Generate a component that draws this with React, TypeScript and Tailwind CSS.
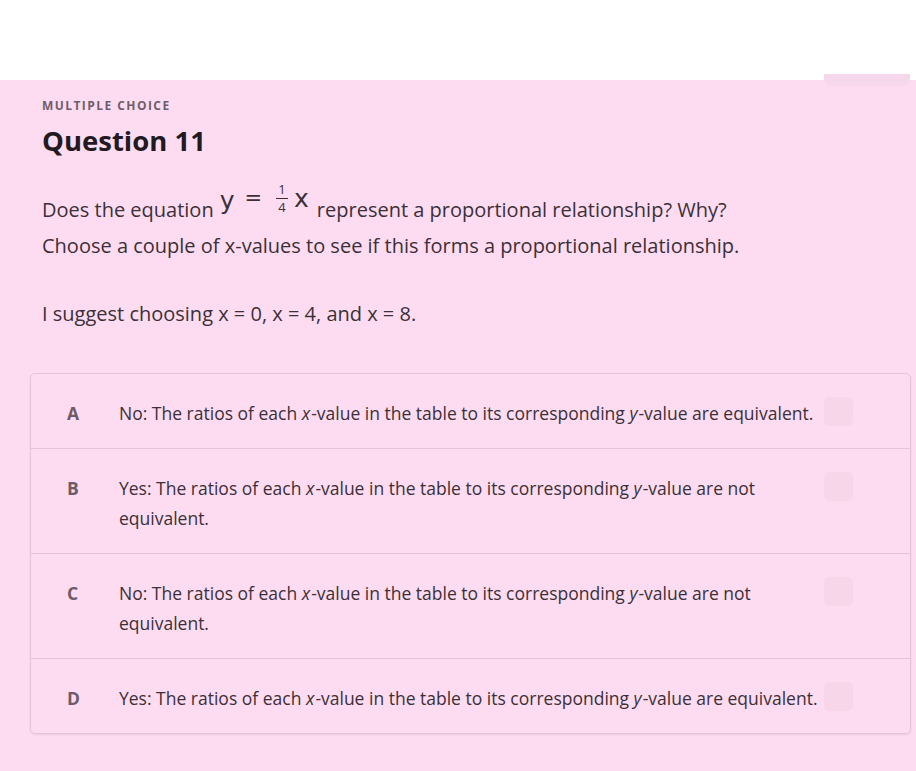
import React from 'react';

const options = [
  { letter: 'A', pre: 'No', rest: 'equivalent.' },
  { letter: 'B', pre: 'Yes', rest: 'not equivalent.' },
  { letter: 'C', pre: 'No', rest: 'not equivalent.' },
  { letter: 'D', pre: 'Yes', rest: 'equivalent.' },
];

const Fraction: React.FC = () => (
  <span className="inline-flex flex-col items-center mx-[4px] text-[13px] leading-[17px]">
    <span>1</span>
    <span className="border-t border-[#3a2f36] w-[12px] text-center">4</span>
  </span>
);

export default function App() {
  return (
    <div className="w-[916px] h-[771px] overflow-hidden bg-[#fddcf2] font-['Open_Sans',sans-serif] text-[#3b3037]">
      <div className="h-20 bg-white relative">
        <div className="absolute right-[6px] -bottom-[6px] w-[86px] h-[12px] rounded-b-lg bg-[#f6d8ec]" />
      </div>
      <div className="pl-[42px] pt-[17px]">
        <div className="text-[12px] font-bold tracking-[0.12em] text-[#6f5c69]">MULTIPLE CHOICE</div>
        <h1 className="mt-[8px] text-[27.5px] font-bold text-[#221a1f] leading-[36px]">Question 11</h1>
        <div className="mt-[33px] text-[20px] leading-[36px]">
          <p className="flex items-end">
            <span>Does the equation</span>
            <span className="inline-flex items-center ml-[6px] mr-[8px] relative -top-[12px] text-[#3b3037]">
              <span className="text-[25px] font-['DejaVu_Sans',sans-serif] leading-none relative top-[2px]">y</span>
              <span className="text-[21px] mx-[10px] leading-none font-['DejaVu_Sans',sans-serif]">=</span>
              <Fraction />
              <span className="text-[25px] ml-[2px] font-['DejaVu_Sans',sans-serif] leading-none">x</span>
            </span>
            <span>represent a proportional relationship? Why?</span>
          </p>
          <p>Choose a couple of x-values to see if this forms a proportional relationship.</p>
          <p className="mt-[32px]">I suggest choosing x = 0, x = 4, and x = 8.</p>
        </div>
      </div>
      <div className="ml-[30px] mr-[5px] mt-[41px] border border-[#e6c3d8] rounded-[5px] shadow-[0_1px_2px_rgba(150,100,130,0.15)]">
        {options.map((o, i) => (
          <div
            key={o.letter}
            className={`flex items-start pl-[36px] pr-[57px] pt-[24px] pb-[20px] ${i > 0 ? 'border-t border-[#e6c3d8]' : ''}`}
          >
            <span className="w-[52px] shrink-0 text-[17.5px] font-bold text-[#6d5b67] leading-[30px]">{o.letter}</span>
            <span className="flex-1 text-[17.5px] leading-[30px] text-[#3b3037] pr-[6px]">
              {o.pre}: The ratios of each <i className="pr-[1px]">x</i>-value in the table to its corresponding{' '}
              <i className="pr-[1px]">y</i>-value are {o.rest}
            </span>
            <span className="w-[29px] h-[29px] -mt-[1px] rounded-[5px] bg-[#f7d6ea] shrink-0" />
          </div>
        ))}
      </div>
    </div>
  );
}
